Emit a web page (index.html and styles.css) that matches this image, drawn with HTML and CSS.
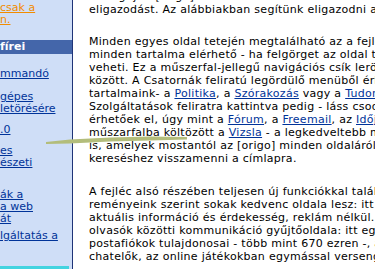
FILE: index.html
```html
<!DOCTYPE html>
<html lang="hu">
<head>
    <meta charset="UTF-8">
    <title>[origo] - Súgó</title>
    <link rel="stylesheet" href="styles.css">
</head>
<body>
<div class="page">

    <!-- Left menu -->
    <div class="sidebar">
        <div class="item item-top">
            <a class="orange" href="#">csak a</a><br>
            <a class="orange" href="#">n.</a>
        </div>
        <div class="current">fírei</div>
        <div class="item item-first"><a href="#">mmandó</a></div>
        <div class="item item-two"><a href="#">gépes</a><br><a href="#">letörésére</a></div>
        <div class="item"><a href="#">.0</a></div>
        <div class="item"><a href="#">es</a><br><a href="#">észeti</a></div>
        <div class="item item-wide"><a href="#">ák a</a><br><a href="#">a web</a><br><a href="#">át</a></div>
        <div class="item item-last"><a href="#">lgáltatás a</a></div>
        <div class="banner"></div>
    </div>

    <!-- Main text -->
    <div class="content">
        <p class="intro">
            A megújult [origo] oldalain talán nehezebb lesz első alkalommal az<br>
            eligazodást. Az alábbiakban segítünk eligazodni az új oldalakon.
        </p>
        <p>
            Minden egyes oldal tetején megtalálható az a fejléc, ahonnan az [origo]<br>
            minden tartalma elérhető - ha felgörget az oldal tetejére, mindig<br>
            veheti. Ez a műszerfal-jellegű navigációs csík lerövidíti az utat a<br>
            között. A Csatornák feliratú legördülő menüből érheti el<br>
            tartalmaink- a <a href="#">Politika</a>, a <a href="#">Szórakozás</a> vagy a <a href="#">Tudomány</a><br>
            Szolgáltatások feliratra kattintva pedig - láss csodát<br>
            érhetőek el, úgy mint a <a href="#">Fórum</a>, a <a href="#">Freemail</a>, az <a href="#">Időjárás</a><br>
            műszarfalba költözött a <a href="#">Vizsla</a> - a legkedveltebb magyar<br>
            is, amelyek mostantól az [origo] minden oldaláról<br>
            kereséshez visszamenni a címlapra.
        </p>
        <p>
            A fejléc alsó részében teljesen új funkciókkal találkozhat<br>
            reményeink szerint sokak kedvenc oldala lesz: itt<br>
            aktuális információ és érdekesség, reklám nélkül.<br>
            olvasók közötti kommunikáció gyűjtőoldala: itt egymásra<br>
            postafiókok tulajdonosai - több mint 670 ezren -, a<br>
            chatelők, az online játékokban egymással versengők
        </p>
    </div>

    <!-- marker stroke over the page -->
    <svg class="stroke" width="375" height="269" viewBox="0 0 375 269">
        <polygon points="46,142 70,139.5 110,137.5 150,136.5 187,137 187,139.5 150,140.5 110,141.5 70,143.5 46,144" fill="#b3bd7b"/>
    </svg>
</div>
</body>
</html>
```

FILE: styles.css
```css
/* Reset */
body, p {
    margin: 0;
    padding: 0;
}

body {
    font-family: "DejaVu Sans", Verdana, sans-serif;
    font-size: 11px;
    color: #000;
    background: #fff;
    overflow: hidden;
}

a {
    color: #003399;
}

.page {
    position: relative;
    display: flex;
    width: 375px;
    height: 269px;
    overflow: hidden;
}

/* Left menu */
.sidebar {
    width: 72px;
    flex-shrink: 0;
    padding-top: 2px;
    background-color: #cfdef7;
    border-right: 1px solid #1f3478;
    line-height: 12px;
    white-space: nowrap;
    overflow: hidden;
}

.item {
    margin-top: 9px;
}

.item-top {
    margin-top: 0;
}

.item-first {
    margin-top: 14px;
}

.item-two {
    margin-top: 11px;
}

.item-wide {
    margin-top: 20px;
}

.item-last {
    margin-top: 5px;
}

a.orange {
    color: #f28c00;
}

.current {
    margin-top: 14px;
    height: 14px;
    line-height: 14px;
    background-color: #4466aa;
    color: #fff;
    font-weight: bold;
}

.banner {
    margin-top: 24px;
    width: 69px;
    height: 10px;
    background:
        radial-gradient(circle, #43d3e0 0.8px, transparent 1px) 0 0 / 2px 2px,
        linear-gradient(to right, #000 0, #0c3640 12px, #178a9a 30px, #1ea9b8 69px);
}

/* Main text */
.content {
    flex: 1;
    padding-left: 16px;
    margin-top: -10px;
    line-height: 13px;
    letter-spacing: 0.28px;
    white-space: nowrap;
}

.content p {
    margin-bottom: 20px;
}

.content p.intro {
    margin-bottom: 19px;
}

.stroke {
    position: absolute;
    left: 0;
    top: 0;
}
```
